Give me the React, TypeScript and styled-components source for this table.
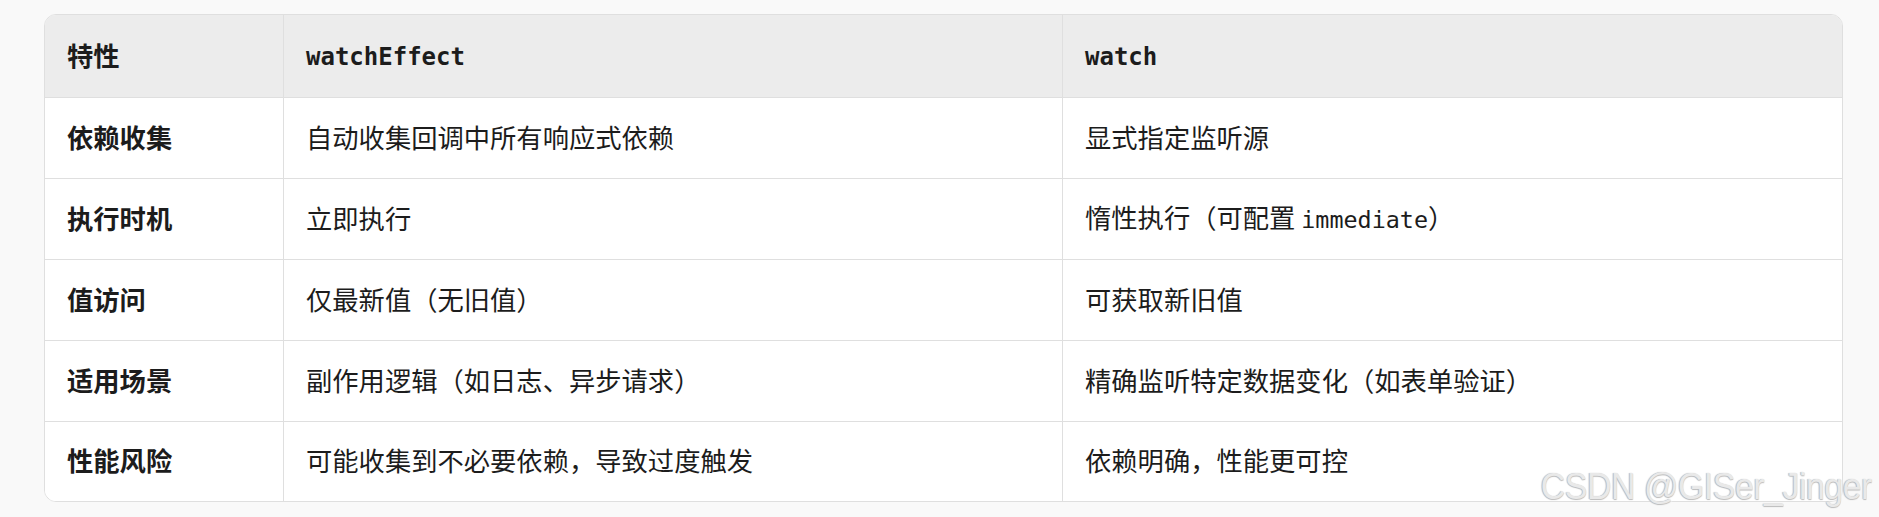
import React from "react";
import styled, { createGlobalStyle } from "styled-components";

const GlobalStyle = createGlobalStyle`
  html, body {
    margin: 0;
    padding: 0;
    background: #f9f9f9;
  }
  body {
    font-family: "Noto Sans CJK SC", "Noto Sans", sans-serif;
    color: #1c1c1c;
  }
`;

const Page = styled.div`
  position: relative;
  width: 1879px;
  height: 517px;
  box-sizing: border-box;
  padding: 14px 36px 0 44px;
  background: #f9f9f9;
  overflow: hidden;
`;

const TableFrame = styled.div`
  border: 1px solid #dfdfdf;
  border-radius: 12px;
  overflow: hidden;
  background: #ffffff;
`;

const Grid = styled.div`
  display: grid;
  grid-template-columns: 239px 1fr 1fr;
`;

const Cell = styled.div<{ $head?: boolean; $last?: boolean; $first?: boolean; $lastRow?: boolean }>`
  box-sizing: border-box;
  height: ${(p) => (p.$head ? 83 : p.$lastRow ? 79 : 81)}px;
  display: flex;
  align-items: center;
  padding: 0 22px 2px;
  font-size: 26.3px;
  line-height: 1.4;
  font-weight: ${(p) => (p.$head || p.$first ? 700 : 400)};
  background: ${(p) => (p.$head ? "#ececec" : "#ffffff")};
  border-right: ${(p) => (p.$last ? "none" : "1px solid #dfdfdf")};
  border-bottom: ${(p) => (p.$lastRow ? "none" : "1px solid #dfdfdf")};
  white-space: nowrap;
`;

const CellText = styled.span`
  white-space: pre;
`;

const Code = styled.code<{ $head?: boolean }>`
  font-family: "DejaVu Sans Mono", "Liberation Mono", monospace;
  font-size: ${(p) => (p.$head ? 24 : 23.4)}px;
`;

const Watermark = styled.div`
  position: absolute;
  right: 7px;
  top: 467px;
  font-family: "Liberation Sans", Arial, sans-serif;
  font-size: 37px;
  line-height: 40px;
  letter-spacing: -0.6px;
  transform: scaleX(0.92);
  transform-origin: right center;
  color: #e9e9e9;
  text-shadow: -1px 0 1px #b8b8b8, 0 1px 1px #bdbdbd, 1px 1px 1px #ffffff;
  white-space: nowrap;
  pointer-events: none;
`;

type RowData = [React.ReactNode, React.ReactNode, React.ReactNode];

const header: RowData = ["特性", <Code $head>watchEffect</Code>, <Code $head>watch</Code>];

const rows: RowData[] = [
  ["依赖收集", "自动收集回调中所有响应式依赖", "显式指定监听源"],
  ["执行时机", "立即执行", <>惰性执行（可配置 <Code>immediate</Code>）</>],
  ["值访问", "仅最新值（无旧值）", "可获取新旧值"],
  ["适用场景", "副作用逻辑（如日志、异步请求）", "精确监听特定数据变化（如表单验证）"],
  ["性能风险", "可能收集到不必要依赖，导致过度触发", "依赖明确，性能更可控"],
];

export default function App() {
  return (
    <>
      <GlobalStyle />
      <Page>
        <TableFrame>
          <Grid>
            {header.map((c, i) => (
              <Cell key={`h${i}`} $head $last={i === 2}>
                <CellText>{c}</CellText>
              </Cell>
            ))}
            {rows.map((r, ri) =>
              r.map((c, ci) => (
                <Cell
                  key={`${ri}-${ci}`}
                  $first={ci === 0}
                  $last={ci === 2}
                  $lastRow={ri === rows.length - 1}
                >
                  <CellText>{c}</CellText>
                </Cell>
              ))
            )}
          </Grid>
        </TableFrame>
        <Watermark>CSDN @GISer_Jinger</Watermark>
      </Page>
    </>
  );
}
